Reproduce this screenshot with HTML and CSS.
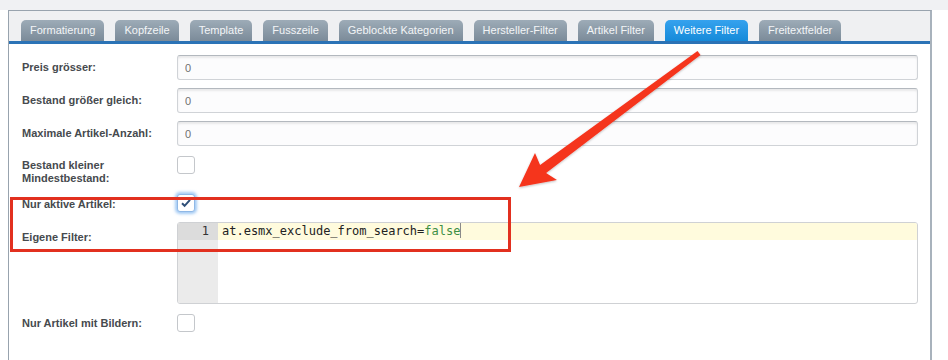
FILE: index.html
```html
<!DOCTYPE html>
<html lang="de">
<head>
    <meta charset="UTF-8">
    <title>Weitere Filter</title>
    <link rel="stylesheet" href="styles.css">
</head>
<body>
    <div class="topstrip"></div>
    <div class="frame">
        <div class="tabbar">
            <span class="tab">Formatierung</span>
            <span class="tab">Kopfzeile</span>
            <span class="tab">Template</span>
            <span class="tab">Fusszeile</span>
            <span class="tab">Geblockte Kategorien</span>
            <span class="tab">Hersteller-Filter</span>
            <span class="tab">Artikel Filter</span>
            <span class="tab active">Weitere Filter</span>
            <span class="tab">Freitextfelder</span>
        </div>
        <form class="form" action="">
            <div class="row r-input">
                <label class="lbl">Preis grösser:</label>
                <input class="field" type="text" value="0">
            </div>
            <div class="row r-input">
                <label class="lbl">Bestand größer gleich:</label>
                <input class="field" type="text" value="0">
            </div>
            <div class="row r-input r-last">
                <label class="lbl">Maximale Artikel-Anzahl:</label>
                <input class="field" type="text" value="0">
            </div>
            <div class="row r-check2">
                <label class="lbl">Bestand kleiner<br>Mindestbestand:</label>
                <span class="check"></span>
            </div>
            <div class="row r-check">
                <label class="lbl">Nur aktive Artikel:</label>
                <span class="check checked focus">
                    <svg width="12" height="10" viewBox="0 0 12 10"><path d="M2 5.2 L4.6 7.8 L10 1.8" fill="none" stroke="#2f4f78" stroke-width="2"/></svg>
                </span>
            </div>
            <div class="row r-editor">
                <label class="lbl">Eigene Filter:</label>
                <div class="editor">
                    <div class="gutter"><div class="ln active-ln">1</div></div>
                    <div class="code">
                        <div class="line active-line">at.esmx_exclude_from_search=<span class="kw">false</span><span class="cursor"></span></div>
                    </div>
                </div>
            </div>
            <div class="row r-check r-bottom">
                <label class="lbl">Nur Artikel mit Bildern:</label>
                <span class="check"></span>
            </div>
        </form>
    </div>

    <svg class="markup" width="948" height="360" viewBox="0 0 948 360">
        <defs>
            <filter id="sh" x="-10%" y="-10%" width="120%" height="120%">
                <feDropShadow dx="0" dy="1" stdDeviation="1" flood-color="#000" flood-opacity="0.25"/>
            </filter>
        </defs>
        <rect x="11.5" y="198.5" width="498" height="52" fill="none" stroke="#e2301f" stroke-width="3"/>
        <polygon filter="url(#sh)" fill="#f5341f" points="697.5,51 540.1,165.1 535,153 519,187 557,180 546.1,173.1 700.5,55"/>
    </svg>
</body>
</html>
```
FILE: styles.css
```css
body {
    margin: 0;
    background: #fff;
    font-family: "Liberation Sans", Arial, sans-serif;
    position: relative;
    width: 948px;
    height: 360px;
    overflow: hidden;
}
.topstrip {
    height: 10px;
    background: #f0f1f3;
}
.frame {
    box-sizing: border-box;
    margin-left: 8px;
    width: 924px;
    height: 350px;
    border-left: 1px solid #98a3ae;
    border-right: 2px solid #a8b2bc;
    border-top: 1px solid #98a3ae;
}
.tabbar {
    display: flex;
    gap: 11px;
    padding: 9px 0 0 12px;
    background: #eff0f2;
    border-bottom: 3px solid #2b73b6;
}
.tab {
    height: 21px;
    line-height: 21px;
    padding: 0 9px;
    font-size: 11px;
    color: #f3f5f7;
    background: linear-gradient(#9dabb7, #7b8b99);
    border-radius: 5px 5px 0 0;
}
.tab.active {
    background: linear-gradient(#35a2ee, #168ad9);
    color: #fff;
}
.form {
    padding: 11px 12px 0 13px;
}
.row {
    display: flex;
    align-items: flex-start;
}
.lbl {
    width: 155px;
    flex: none;
    font-size: 11px;
    font-weight: bold;
    color: #464a4e;
    line-height: 13px;
}
.r-input {
    margin-bottom: 8px;
}
.r-input .lbl {
    padding-top: 6px;
}
.r-input.r-last {
    margin-bottom: 10px;
}
.field {
    box-sizing: border-box;
    width: 742px;
    height: 25px;
    margin: 0;
    padding: 0 7px;
    border: 1px solid #d0d3d7;
    border-top-color: #b3b8be;
    border-radius: 3px;
    background: #fcfcfd;
    box-shadow: inset 0 2px 2px rgba(0, 0, 0, 0.08);
    font-family: "Liberation Sans", Arial, sans-serif;
    font-size: 11px;
    color: #707070;
}
.check {
    box-sizing: border-box;
    width: 18px;
    height: 18px;
    border: 1px solid #c4c7cb;
    border-radius: 3px;
    background: #fff;
    display: flex;
    align-items: center;
    justify-content: center;
}
.check.focus {
    border-color: #8fb8e6;
    box-shadow: 0 0 3px 2px rgba(90, 160, 235, 0.55);
}
.r-check2 {
    margin-bottom: 9px;
}
.r-check2 .lbl {
    padding-top: 3px;
}
.r-check {
    margin-bottom: 10px;
}
.r-check .lbl {
    padding-top: 4px;
}
.r-bottom .lbl {
    padding-top: 3px;
}
.r-editor {
    margin-bottom: 10px;
}
.r-editor .lbl {
    padding-top: 9px;
}
.editor {
    box-sizing: border-box;
    width: 742px;
    height: 82px;
    display: flex;
    border: 1px solid #cfd1d4;
    border-radius: 3px;
    background: #fff;
    overflow: hidden;
    font-family: "DejaVu Sans Mono", monospace;
    font-size: 12px;
}
.gutter {
    width: 40px;
    flex: none;
    background: #ebebeb;
}
.ln {
    height: 17px;
    line-height: 17px;
    text-align: right;
    padding-right: 9px;
    color: #333;
}
.active-ln {
    background: #dcdcdc;
}
.code {
    flex: 1;
}
.line {
    height: 17px;
    line-height: 17px;
    padding-left: 4px;
    color: #222;
}
.active-line {
    background: #fffbdd;
}
.kw {
    color: #3d8f45;
}
.cursor {
    display: inline-block;
    width: 1px;
    height: 15px;
    vertical-align: -3px;
    background: #8a8a8a;
}
.markup {
    position: absolute;
    left: 0;
    top: 0;
}
```
